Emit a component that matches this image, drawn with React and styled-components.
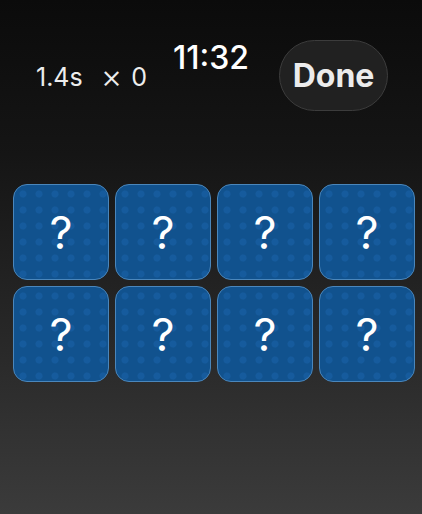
import React from 'react';
import styled, { createGlobalStyle } from 'styled-components';

const GlobalStyle = createGlobalStyle`
  html, body {
    margin: 0;
    padding: 0;
  }
  body {
    font-family: 'Inter', 'Liberation Sans', sans-serif;
  }
`;

const Screen = styled.div`
  width: 422px;
  height: 514px;
  background: linear-gradient(180deg, #0b0b0b 0%, #151515 30%, #2a2a2a 70%, #3b3b3b 100%);
  color: #f2f2f2;
  overflow: hidden;
`;

const Header = styled.div`
  display: flex;
  align-items: center;
  padding: 40px 34px 0 36px;
`;

const Stats = styled.div`
  display: flex;
  align-items: center;
  font-size: 25px;
  font-weight: 400;
  color: #ededed;
  margin-top: 2px;
`;

const Cross = styled.span`
  margin-left: 18px;
  margin-right: 9px;
  font-size: 33px;
  font-weight: 300;
  line-height: 1;
`;

const Clock = styled.div`
  align-self: flex-start;
  margin-left: auto;
  margin-top: 2px;
  font-size: 32px;
  font-weight: 500;
  line-height: 1;
  color: #ffffff;
`;

const DoneButton = styled.button`
  margin-left: 30px;
  width: 109px;
  height: 71px;
  border-radius: 36px;
  background: #212121;
  border: 1.5px solid #3c3c3c;
  color: #ececec;
  font-family: 'Inter', 'Liberation Sans', sans-serif;
  font-size: 32px;
  font-weight: 700;
  padding: 0;
`;

const Board = styled.div`
  display: grid;
  grid-template-columns: repeat(4, 96px);
  grid-auto-rows: 96px;
  gap: 6px;
  padding: 73px 0 0 13px;
`;

const Tile = styled.div`
  box-sizing: border-box;
  border-radius: 14px;
  border: 1.5px solid #4a86bb;
  background-color: #11528e;
  background-image: radial-gradient(circle, rgba(30, 105, 180, 0.4) 3px, transparent 4px);
  background-size: 16px 16px;
  background-position: 1px 1px;
  display: flex;
  align-items: center;
  justify-content: center;
  font-size: 45px;
  font-weight: 400;
  color: #ffffff;
`;

const tiles = Array.from({ length: 8 }, (_, i) => i);

const App = () => {
  return (
    <>
      <GlobalStyle />
      <Screen>
        <Header>
          <Stats>
            1.4s<Cross>×</Cross>0
          </Stats>
          <Clock>11:32</Clock>
          <DoneButton>Done</DoneButton>
        </Header>
        <Board>
          {tiles.map((t) => (
            <Tile key={t}>?</Tile>
          ))}
        </Board>
      </Screen>
    </>
  );
};

export default App;
